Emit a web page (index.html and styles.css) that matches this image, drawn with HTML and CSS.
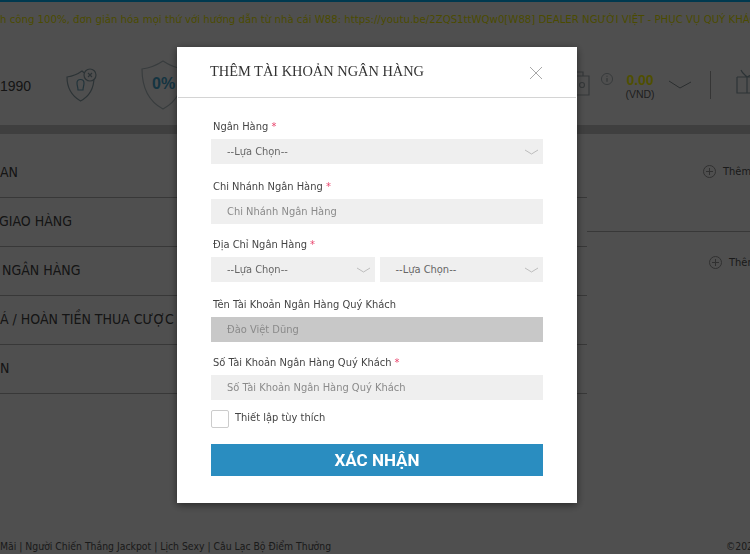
FILE: index.html
```html
<!DOCTYPE html>
<html lang="vi">
<head>
<meta charset="utf-8">
<title>Thêm tài khoản ngân hàng</title>
<link rel="stylesheet" href="styles.css">
</head>
<body>
<div class="page">
  <div class="stripe"></div>
  <div class="notice">h công 100%, đơn giản hóa mọi thứ với hướng dẫn từ nhà cái W88: https://youtu.be/2ZQS1ttWQw0[W88] DEALER NGƯỜI VIỆT - PHỤC VỤ QUÝ KHÁCH</div>
  <header class="header">
    <div class="header-left">
      <span class="year">1990</span>
      <svg class="shield-small" width="32" height="36" viewBox="0 0 32 36" fill="none" stroke="#8fa5ad" stroke-width="1.2">
        <path d="M2 10 C8 9 13 7 17 4 C20 7 24 9 29 10 C29 20 25 29 15.500 34 C7 29 2 20 2 10Z"/>
        <path d="M12 16 a3.500 3.500 0 0 1 7 0 c0 3 -1 4 -1 7 h-5 c0 -3 -1 -4 -1 -7Z" stroke="#6fa6bd"/>
        <circle cx="25" cy="8" r="6" fill="#fff"/>
        <path d="M23 6l4 4M27 6l-4 4"/>
      </svg>
      <div class="shield-big">
        <svg width="44" height="50" viewBox="0 0 44 50" fill="none" stroke="#b5c2c7" stroke-width="1.2">
          <path d="M1 9 C9 8 16 5 22 1 C28 5 35 8 43 9 C43 26 37 41 22 49 C7 41 1 26 1 9Z"/>
        </svg>
        <span class="percent">0%</span>
      </div>
    </div>
    <div class="header-right">
      <svg class="wallet" width="16" height="26" viewBox="0 0 16 26" fill="none" stroke="#a9b4b8" stroke-width="1.2">
        <path d="M0 2h9v4M0 6h15v19H0"/>
        <circle cx="8" cy="15" r="2.500"/>
      </svg>
      <svg class="info" width="12" height="12" viewBox="0 0 13 13" fill="none" stroke="#a9b4b8">
        <circle cx="6.500" cy="6.500" r="6"/>
        <path d="M6.500 5.500v4M6.500 3v1" stroke="#8a9498"/>
      </svg>
      <div class="balance">
        <span class="amount">0.00</span>
        <span class="currency">(VND)</span>
      </div>
      <svg class="chevron-big" width="24" height="10" viewBox="0 0 24 10" fill="none" stroke="#8a9498">
        <path d="M1 1l11 7 11-6"/>
      </svg>
      <span class="divider"></span>
      <svg class="gift" width="20" height="25" viewBox="0 0 20 25" fill="none" stroke="#8fa5ad" stroke-width="1.2">
        <path d="M1 8h19M1 8v16h19M11 8v16M11 8C9 6 6 4 5 1M11 8c3-2 6-3 9-4"/>
      </svg>
    </div>
  </header>
  <div class="band"></div>
  <main class="main">
    <nav class="sidebar">
      <div class="side-row first"><span>AN</span></div>
      <div class="side-row"><span class="pull">GIAO HÀNG</span></div>
      <div class="side-row"><span class="nudge">NGÂN HÀNG</span></div>
      <div class="side-row"><span>Á / HOÀN TIỀN THUA CƯỢC</span></div>
      <div class="side-row"><span>N</span></div>
      <div class="side-row"></div>
    </nav>
    <section class="panel">
      <div class="panel-row one">
        <svg width="13" height="13" viewBox="0 0 13 13" fill="none" stroke="#9a9a9a"><circle cx="6.500" cy="6.500" r="6"/><path d="M6.500 3v7M3 6.500h7"/></svg>
        <span>Thêm</span>
      </div>
      <div class="panel-row two">
        <svg width="13" height="13" viewBox="0 0 13 13" fill="none" stroke="#9a9a9a"><circle cx="6.500" cy="6.500" r="6"/><path d="M6.500 3v7M3 6.500h7"/></svg>
        <span>Thêm</span>
      </div>
    </section>
  </main>
  <footer class="footer">
    <span>Mãi | Người Chiến Thắng Jackpot | Lịch Sexy | Câu Lạc Bộ Điểm Thưởng</span>
    <span class="copy">©202</span>
  </footer>
</div>

<div class="overlay">
  <div class="modal">
    <div class="modal-head">
      <h2>THÊM TÀI KHOẢN NGÂN HÀNG</h2>
      <svg width="14" height="14" viewBox="0 0 14 14" fill="none" stroke="#a8a8a8"><path d="M1 1l12 12M13 1L1 13"/></svg>
    </div>
    <form class="form">
      <div class="field">
        <label>Ngân Hàng <em>*</em></label>
        <div class="control select"><span>--Lựa Chọn--</span><svg width="15" height="6" viewBox="0 0 15 6" fill="none" stroke="#bdbdbd"><path d="M1 1l6.500 4L14 1"/></svg></div>
      </div>
      <div class="field">
        <label>Chi Nhánh Ngân Hàng <em>*</em></label>
        <div class="control placeholder">Chi Nhánh Ngân Hàng</div>
      </div>
      <div class="field">
        <label>Địa Chỉ Ngân Hàng <em>*</em></label>
        <div class="split">
          <div class="control select"><span>--Lựa Chọn--</span><svg width="15" height="6" viewBox="0 0 15 6" fill="none" stroke="#bdbdbd"><path d="M1 1l6.500 4L14 1"/></svg></div>
          <div class="control select"><span>--Lựa Chọn--</span><svg width="15" height="6" viewBox="0 0 15 6" fill="none" stroke="#bdbdbd"><path d="M1 1l6.500 4L14 1"/></svg></div>
        </div>
      </div>
      <div class="field">
        <label>Tên Tài Khoản Ngân Hàng Quý Khách</label>
        <div class="control disabled">Đào Việt Dũng</div>
      </div>
      <div class="field">
        <label>Số Tài Khoản Ngân Hàng Quý Khách <em>*</em></label>
        <div class="control placeholder">Số Tài Khoản Ngân Hàng Quý Khách</div>
      </div>
      <div class="check">
        <span class="box"></span>
        <span class="check-text">Thiết lập tùy thích</span>
      </div>
      <button type="button" class="submit">XÁC NHẬN</button>
    </form>
  </div>
</div>
</body>
</html>
```
FILE: styles.css
```css
* { box-sizing: border-box; }
html, body { margin: 0; height: 100%; overflow: hidden; }
body { font-family: "DejaVu Sans Condensed", "DejaVu Sans", sans-serif; font-stretch: condensed; color: #333; background: #fff; }
svg { flex: none; }

.page { width: 750px; height: 554px; display: flex; flex-direction: column; overflow: hidden; background: #fff; }
.stripe { height: 2px; background: #00b8ff; flex: none; }
.notice { height: 43px; flex: none; padding-top: 9px; font-size: 11.300px; line-height: 18px; white-space: nowrap; overflow: hidden; color: #f2f200; }

.header { height: 80px; flex: none; display: flex; justify-content: space-between; align-items: center; }
.header-left { display: flex; align-items: center; }
.year { font-size: 14px; font-family: "Liberation Sans", sans-serif; color: #444; width: 65px; padding-top: 2px; }
.shield-small { margin-right: 44px; }
.shield-big { position: relative; width: 44px; height: 50px; }
.percent { position: absolute; left: 11px; top: 14px; font: 700 16px/20px "Liberation Sans", sans-serif; color: #45a8d2; white-space: nowrap; }
.header-right { display: flex; align-items: center; margin-right: -6px; }
.wallet { margin-bottom: 4px; }
.info { margin-left: 11px; margin-bottom: 12px; }
.balance { display: flex; flex-direction: column; align-items: center; width: 34px; margin-left: 10px; line-height: 14px; margin-top: 3px; font-family: "Liberation Sans", sans-serif; }
.amount { font-size: 14px; font-weight: 700; color: #ffff00; }
.currency { font-size: 10.500px; color: #666; }
.chevron-big { margin-left: 11px; }
.divider { width: 1px; height: 28px; background: #aaa; margin: 0 25px 0 18px; }
.gift { margin-bottom: 8px; }

.band { height: 9px; flex: none; background: #cbcbcb; }

.main { flex: 1; display: flex; min-height: 0; }
.sidebar { width: 587px; flex: none; padding-top: 15px; }
.side-row { height: 49px; border-bottom: 1px solid #b5b5b5; display: flex; align-items: center; padding-bottom: 2px; font-size: 14px; color: #444; white-space: nowrap; overflow: hidden; }
.side-row:last-child { border-bottom: 0; }
.pull { margin-left: -1px; }
.nudge { margin-left: 2px; }
.panel { flex: 1; min-width: 0; overflow: hidden; }
.panel-row { display: flex; align-items: center; gap: 7px; font-size: 11px; color: #555; white-space: nowrap; }
.panel-row.one { height: 98px; border-bottom: 1px solid #b5b5b5; padding: 0 0 22px 116px; }
.panel-row.two { height: 61px; padding: 0 0 0 122px; }

.footer { height: 28px; flex: none; display: flex; justify-content: space-between; padding: 12px 0 0 0; font-size: 10.350px; line-height: 16px; color: #555; white-space: nowrap; }
.copy { margin-right: -3px; }

.overlay { position: fixed; inset: 0; background: rgba(0, 0, 0, .69); display: flex; justify-content: center; padding: 47px 0 0 4px; }
.modal { width: 400px; height: 456px; background: #fff; box-shadow: 0 2px 8px rgba(0, 0, 0, .5); display: flex; flex-direction: column; }
.modal-head { height: 51px; flex: none; border-bottom: 1px solid #d4d4d4; display: flex; justify-content: space-between; align-items: center; padding: 0 33px 0 32px; margin: 0 1px; }
.modal-head h2 { margin: 0 0 2px; font: 400 14.400px/20px "Liberation Serif", serif; color: #333; }
.modal-head svg { margin-top: 1px; }

.form { padding: 21px 34px 0; display: flex; flex-direction: column; }
.field { margin-bottom: 13px; }
.field:nth-child(odd) { margin-bottom: 15px; }
.field:nth-child(5) { margin-bottom: 10px; }
.field label { display: block; height: 20px; padding-left: 2px; font-size: 11px; line-height: 16px; color: #444; }
.field label em { font-style: normal; color: #e8436b; }
.control { height: 25px; background: #efefef; font-size: 11px; line-height: 25px; padding-left: 16px; color: #666; }
.placeholder { color: #8a8a8a; }
.disabled { background: #c8c8c8; color: #8a8a8a; }
.select { display: flex; justify-content: space-between; align-items: center; padding-right: 4px; }
.split { display: flex; gap: 5px; }
.split .select { flex: 1; }
.check { display: flex; align-items: center; gap: 6px; font-size: 11px; line-height: 18px; color: #444; margin: 0 0 16px; }
.check-text { margin-top: -3px; }
.box { width: 18px; height: 18px; background: #fff; border: 1px solid #ccc; border-radius: 2px; }
.submit { height: 32px; border: 0; background: #2a8dc0; color: #fff; font: 700 17px/32px Roboto, sans-serif; font-stretch: normal; padding: 0; }
```
